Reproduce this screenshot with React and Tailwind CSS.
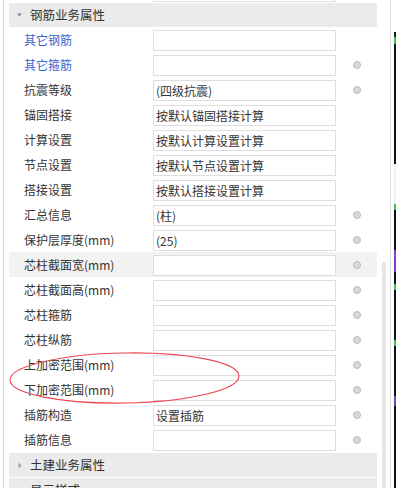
import React from "react";

const rows = [
  { label: "其它钢筋", value: "", blue: true, dot: false },
  { label: "其它箍筋", value: "", blue: true, dot: true },
  { label: "抗震等级", value: "(四级抗震)", dot: true },
  { label: "锚固搭接", value: "按默认锚固搭接计算", dot: false },
  { label: "计算设置", value: "按默认计算设置计算", dot: false },
  { label: "节点设置", value: "按默认节点设置计算", dot: false },
  { label: "搭接设置", value: "按默认搭接设置计算", dot: false },
  { label: "汇总信息", value: "(柱)", dot: true },
  { label: "保护层厚度(mm)", value: "(25)", dot: true },
  { label: "芯柱截面宽(mm)", value: "", dot: true, hl: true },
  { label: "芯柱截面高(mm)", value: "", dot: true },
  { label: "芯柱箍筋", value: "", dot: true },
  { label: "芯柱纵筋", value: "", dot: true },
  { label: "上加密范围(mm)", value: "", dot: true },
  { label: "下加密范围(mm)", value: "", dot: true },
  { label: "插筋构造", value: "设置插筋", dot: true },
  { label: "插筋信息", value: "", dot: true },
];

function Row({ r }) {
  return (
    <div
      className={
        "flex h-[25px] shrink-0 items-center " + (r.hl ? "bg-[#f2f2f2]" : "bg-white")
      }
    >
      <div
        className={
          "w-[144px] pl-[15px] whitespace-nowrap " +
          (r.blue ? "text-[#3566d0]" : "text-[#333333]")
        }
      >
        {r.label}
      </div>
      <div className="mt-[2px] flex h-[21px] w-[183px] items-center border border-[#dedede] bg-white pl-[2px] text-[#333333] whitespace-nowrap overflow-hidden">
        {r.value}
      </div>
      <div className="ml-[17px] flex w-[8px] items-center">
        {r.dot && (
          <div className="h-[8px] w-[8px] rounded-full border border-[#bcbcbc] bg-[#d9d9d9]" />
        )}
      </div>
    </div>
  );
}

function Header({ title, open, extra }) {
  return (
    <div
      className={
        "flex h-[24px] shrink-0 items-center bg-[#ebebeb] text-[#333333] " + (extra || "")
      }
    >
      <div className="flex w-[21px] justify-end pr-[8px]">
        {open ? (
          <svg width="5" height="4" viewBox="0 0 5 4">
            <path d="M0 0.5 L5 0.5 L2.5 3.5 Z" fill="#8a8a8a" />
          </svg>
        ) : (
          <svg width="4" height="7" viewBox="0 0 4 7">
            <path d="M0.5 0.5 L3.5 3.5 L0.5 6.5 Z" fill="#a0a0a0" />
          </svg>
        )}
      </div>
      <span className="whitespace-nowrap text-[12.5px]">{title}</span>
    </div>
  );
}

export default function App() {
  return (
    <div
      className="relative flex h-[488px] w-[396px] overflow-hidden bg-white text-[12px]"
      style={{ fontFamily: '"Microsoft YaHei","Noto Sans CJK SC","Noto Sans",sans-serif' }}
    >
      <div className="w-[3px] shrink-0" />
      <div className="w-[1px] shrink-0 bg-[#d6d6d6]" />
      <div className="w-[5px] shrink-0" />
      <div className="flex w-[368px] shrink-0 flex-col">
        <div className="mt-[-22px] shrink-0">
          <Row r={{ label: "", value: "", dot: false }} />
        </div>
        <Header title="钢筋业务属性" open />
        {rows.map((r, i) => (
          <Row key={i} r={r} />
        ))}
        <Header title="土建业务属性" extra="mt-[1px]" />
        <Header title="显示样式" extra="mt-[1px]" />
      </div>
      <div className="w-[5px] shrink-0" />
      <div className="flex w-[4px] shrink-0 flex-col pt-[262px]">
        <div className="flex-1 rounded-t-full bg-[#e6e6e6]" />
      </div>
      <div className="w-[4px] shrink-0" />
      <div className="w-[1px] shrink-0 bg-[#dcdcdc]" />
      <div className="w-[3px] shrink-0" />
      <div className="flex w-[2px] shrink-0 flex-col pt-[32px]">
        <div className="h-[5px] shrink-0 bg-[#1a1a1a]" />
        <div className="h-[7px] shrink-0 bg-[#3fbf4a]" />
        <div className="h-[120px] shrink-0 bg-[#111111]" />
        <div className="h-[40px] shrink-0 bg-[#f0f0f0]" />
        <div className="h-[6px] shrink-0 bg-[#3fbf4a]" />
        <div className="h-[40px] shrink-0 bg-[#111111]" />
        <div className="h-[22px] shrink-0 bg-[#8a3fd0]" />
        <div className="h-[12px] shrink-0 bg-[#111111]" />
        <div className="h-[6px] shrink-0 bg-[#3fbf4a]" />
        <div className="h-[50px] shrink-0 bg-[#111111]" />
        <div className="h-[6px] shrink-0 bg-[#3fbf4a]" />
        <div className="h-[50px] shrink-0 bg-[#111111]" />
        <div className="h-[10px] shrink-0 bg-[#5a4fc0]" />
        <div className="flex-1 bg-[#111111]" />
      </div>
      <svg
        className="pointer-events-none absolute left-0 top-0"
        width="396"
        height="488"
        viewBox="0 0 396 488"
      >
        <ellipse
          cx="124.5"
          cy="378"
          rx="114.5"
          ry="25"
          transform="rotate(-1 124.5 378)"
          fill="none"
          stroke="#ee4650"
          strokeWidth="1.1"
        />
      </svg>
    </div>
  );
}
